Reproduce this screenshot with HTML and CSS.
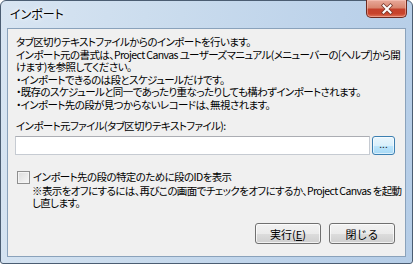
FILE: index.html
```html
<!DOCTYPE html>
<html lang="ja">
<head>
    <meta charset="UTF-8">
    <title>インポート</title>
    <link rel="stylesheet" href="styles.css">
</head>
<body>
    <div class="window">
        <div class="titlebar">
            <span class="title">インポート</span>
            <button type="button" class="close-btn" aria-label="閉じる">
                <svg width="14" height="12" viewBox="0 0 14 12">
                    <path d="M3.5 2.5 L10.5 9.5 M10.5 2.5 L3.5 9.5" stroke="#7a3a2e" stroke-width="3.6" stroke-linecap="square"/>
                    <path d="M3.5 2.5 L10.5 9.5 M10.5 2.5 L3.5 9.5" stroke="#ffffff" stroke-width="2" stroke-linecap="square"/>
                </svg>
            </button>
        </div>

        <div class="client">
            <p class="intro">
                タブ区切りテキストファイルからのインポートを行います。<br>
                インポート元の書式は、Project Canvas ユーザーズマニュアル(メニューバーの[ヘルプ]から開<br>
                けます)を参照してください。<br>
                ・インポートできるのは段とスケジュールだけです。<br>
                ・既存のスケジュールと同一であったり重なったりしても構わずインポートされます。<br>
                ・インポート先の段が見つからないレコードは、無視されます。
            </p>

            <label class="field-label" for="sourceFile">インポート元ファイル(タブ区切りテキストファイル):</label>
            <div class="file-row">
                <input type="text" id="sourceFile" class="file-input">
                <button type="button" class="browse-btn">...</button>
            </div>

            <label class="check-row">
                <span class="check-box"></span>
                インポート先の段の特定のために段のIDを表示
            </label>
            <p class="note">
                ※表示をオフにするには、再びこの画面でチェックをオフにするか、Project Canvas を起動<br>
                し直します。
            </p>

            <div class="actions">
                <button type="button" class="dlg-btn">実行(<u>E</u>)</button>
                <button type="button" class="dlg-btn">閉じる</button>
            </div>
        </div>
    </div>
</body>
</html>
```

FILE: styles.css
```css
html, body {
    margin: 0;
    padding: 0;
    background: #ffffff;
}
body {
    font-family: "Noto Sans CJK JP", "Noto Sans", sans-serif;
    font-feature-settings: "palt";
    font-size: 10.5px;
    letter-spacing: -0.6px;
    color: #000;
}
.window {
    width: 413px;
    height: 264px;
    box-sizing: border-box;
    border: 1px solid #4b5d72;
    border-radius: 6px 6px 3px 3px;
    background: linear-gradient(100deg, #d8e5f2 0%, #c9dbed 40%, #bcd2ea 75%, #b5cde7 100%);
    padding: 0 6px 6px 6px;
    display: flex;
    flex-direction: column;
}
.titlebar {
    height: 27px;
    display: flex;
    align-items: flex-start;
    justify-content: space-between;
}
.title {
    font-size: 12px;
    letter-spacing: 0;
    margin: 4px 0 0 3px;
    text-shadow: 0 0 6px #ffffff, 0 0 3px #ffffff;
}
.close-btn {
    width: 41px;
    height: 18px;
    margin: -1px -1px 0 0;
    padding: 0;
    border: 1px solid #6e2a20;
    border-top: none;
    border-radius: 0 0 5px 5px;
    background: linear-gradient(#e8a99a 0%, #d98670 45%, #c5412c 55%, #c8432b 80%, #e0745a 100%);
    box-shadow: inset 0 0 0 1px rgba(255, 210, 200, 0.45);
    display: flex;
    align-items: center;
    justify-content: center;
}
.client {
    flex: 1;
    background: #f0f0f0;
    border: 1px solid #8aa2bb;
    padding: 7px 10px 12px 7px;
    display: flex;
    flex-direction: column;
    line-height: 12.5px;
    white-space: nowrap;
}
.intro {
    margin: 0 0 0 1px;
}
.field-label {
    margin: 9px 0 0 1px;
}
.file-row {
    display: flex;
    gap: 2px;
    margin-top: 3px;
    align-items: center;
}
.file-input {
    width: 355px;
    height: 19px;
    box-sizing: border-box;
    border: 1px solid #c6cbd2;
    border-top-color: #abadb3;
    background: #fff;
    margin: 0;
}
.browse-btn {
    width: 23px;
    height: 19px;
    padding: 0 0 3px 0;
    border: 1px solid #3c7fb1;
    border-radius: 3px;
    background: linear-gradient(#eaf6fd 0%, #d9f0fc 50%, #bee6fd 51%, #a7d9f5 100%);
    box-shadow: inset 0 0 0 1px rgba(255, 255, 255, 0.6);
    font-family: inherit;
    font-size: 10px;
    line-height: 10px;
    letter-spacing: 0;
    color: #222;
}
.check-row {
    display: flex;
    align-items: center;
    gap: 3px;
    margin: 16px 0 0 2px;
}
.check-box {
    width: 11px;
    height: 11px;
    border: 1px solid #8f8f8f;
    background: linear-gradient(135deg, #dcdcdc, #f7f7f7);
    box-shadow: inset 0 0 0 1px #f4f4f4;
}
.note {
    margin: 1px 0 0 17px;
}
.actions {
    margin-top: auto;
    display: flex;
    justify-content: flex-end;
    gap: 8px;
}
.dlg-btn {
    width: 66px;
    height: 21px;
    padding: 0;
    border: 1px solid #707070;
    border-radius: 3px;
    background: linear-gradient(#f2f2f2 0%, #ebebeb 50%, #dddddd 51%, #cfcfcf 100%);
    box-shadow: inset 0 0 0 1px rgba(255, 255, 255, 0.7);
    font-family: inherit;
    font-size: 11px;
    letter-spacing: 0;
    color: #000;
}
.dlg-btn u {
    text-decoration: underline;
}
```
